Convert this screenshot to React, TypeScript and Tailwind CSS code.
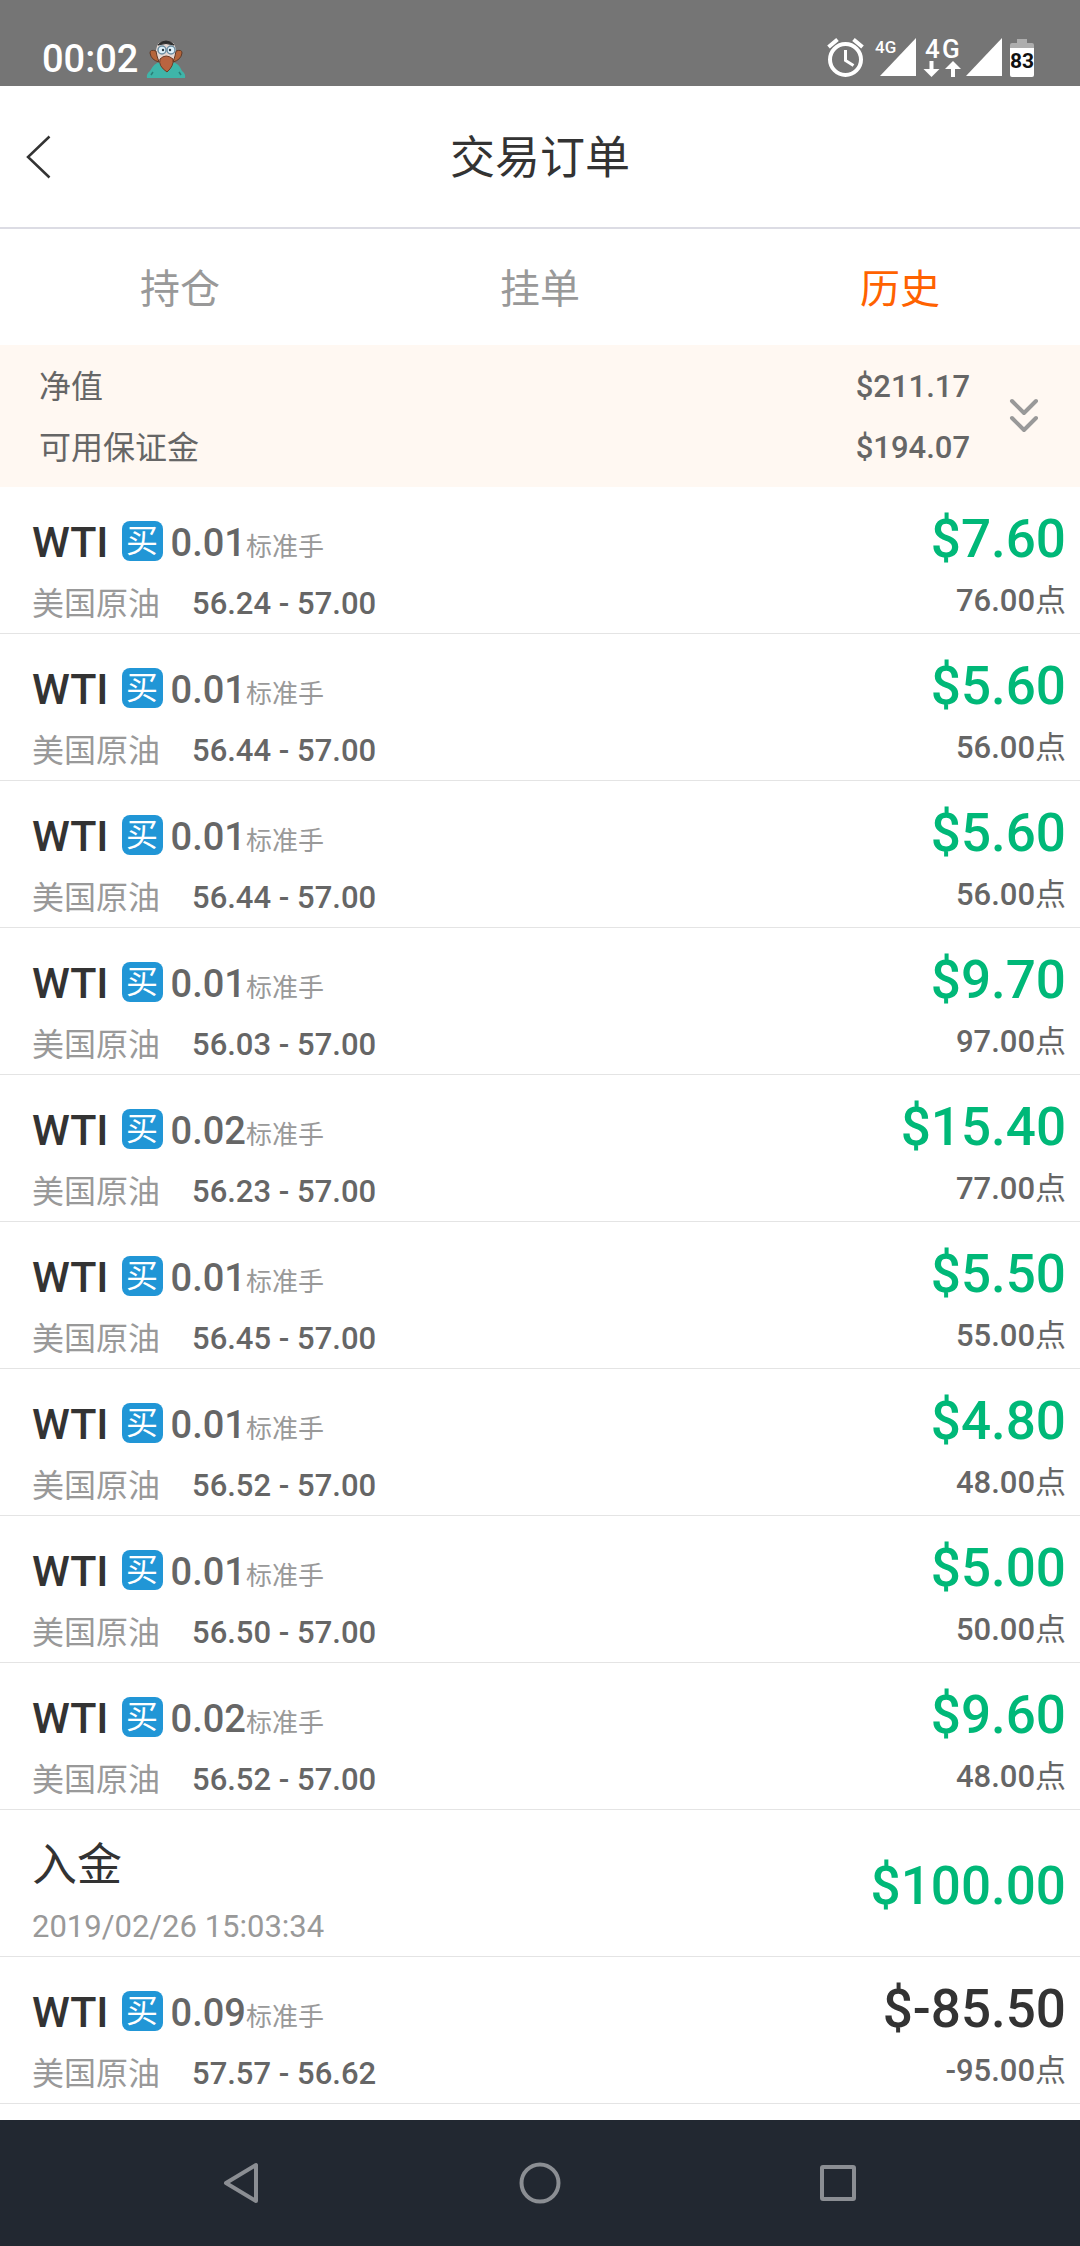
import clsx from 'clsx';

type Entry = {
  id: number;
  type: 'trade' | 'deposit';
  lots?: string;
  open?: string;
  close?: string;
  time?: string;
  profit: string;
  points?: string;
};

const summary = [
  { label: '净值', value: '$211.17' },
  { label: '可用保证金', value: '$194.07' },
];

const tabs = ['持仓', '挂单', '历史'];

const entries: Entry[] = [
  { id: 1, type: 'trade', lots: '0.01', open: '56.24', close: '57.00', profit: '7.60', points: '76.00' },
  { id: 2, type: 'trade', lots: '0.01', open: '56.44', close: '57.00', profit: '5.60', points: '56.00' },
  { id: 3, type: 'trade', lots: '0.01', open: '56.44', close: '57.00', profit: '5.60', points: '56.00' },
  { id: 4, type: 'trade', lots: '0.01', open: '56.03', close: '57.00', profit: '9.70', points: '97.00' },
  { id: 5, type: 'trade', lots: '0.02', open: '56.23', close: '57.00', profit: '15.40', points: '77.00' },
  { id: 6, type: 'trade', lots: '0.01', open: '56.45', close: '57.00', profit: '5.50', points: '55.00' },
  { id: 7, type: 'trade', lots: '0.01', open: '56.52', close: '57.00', profit: '4.80', points: '48.00' },
  { id: 8, type: 'trade', lots: '0.01', open: '56.50', close: '57.00', profit: '5.00', points: '50.00' },
  { id: 9, type: 'trade', lots: '0.02', open: '56.52', close: '57.00', profit: '9.60', points: '48.00' },
  { id: 10, type: 'deposit', time: '2019/02/26 15:03:34', profit: '100.00' },
  { id: 11, type: 'trade', lots: '0.09', open: '57.57', close: '56.62', profit: '-85.50', points: '-95.00' },
];

function AvatarIcon() {
  return (
    <svg width="40" height="38" viewBox="0 0 40 38">
      <path d="M1 38 Q0 34 4 31 Q8 23 14 22 H26 Q33 23 36 31 Q40 34 39 38 Z" fill="#3fb5a9" />
      <path d="M5 35l2-3M35 35l-2-3" stroke="#2b7f78" strokeWidth="1.5" />
      <path d="M10 10 Q11 1 20 1 Q29 1 30 10 L31 19 Q26 23 20 23 Q14 23 9 19 Z" fill="#e4d8d3" />
      <path d="M10 11 Q4 9 4 13 Q5 20 13 22 L11 16 ZM30 11 Q36 9 36 13 Q35 20 27 22 L29 16 Z" fill="#b5653a" stroke="#5f3a28" strokeWidth="1" />
      <path d="M12 5 Q15 1 20 1 Q25 1 28 5 Q20 2 12 5 Z" fill="#2e2e2e" stroke="#2e2e2e" strokeWidth="1" />
      <path d="M14 19 Q20 13 27 19 Q28 26 21 32 Q12 26 14 19 Z" fill="#b96440" stroke="#6e3b25" strokeWidth="1" />
      <circle cx="16" cy="10" r="4" fill="#dff1fa" stroke="#6b8da1" strokeWidth="1.5" />
      <circle cx="25" cy="10" r="4" fill="#dff1fa" stroke="#6b8da1" strokeWidth="1.5" />
      <circle cx="17" cy="10" r="1.2" fill="#24343d" />
      <circle cx="24" cy="10" r="1.2" fill="#24343d" />
    </svg>
  );
}

function StatusIcons() {
  return (
    <svg width="208" height="54" viewBox="0 -14 208 54" fontFamily="Roboto, sans-serif">
      {/* alarm */}
      <g fill="none" stroke="#fff">
        <circle cx="18.5" cy="21.5" r="15.5" strokeWidth="4" />
        <path d="M18.5 12v10.5l8 5" strokeWidth="3" />
        <path d="M1.5 9l9-7.500M35.500 9l-9-7.500" strokeWidth="4" />
      </g>
      {/* sim 1 */}
      <path d="M89 0v38H53z" fill="#fff" />
      <text x="48" y="15" fontSize="17" fontWeight="500" fill="#fff">4G</text>
      {/* sim 2 */}
      <text x="98" y="20" fontSize="26" fontWeight="500" fill="#fff">4</text>
      <text x="115" y="20" fontSize="26" fontWeight="500" fill="#fff">G</text>
      <path d="M102.500 23h4v8h6l-8 8-8-8h6zM124 39h4v-8h6l-8-8-8 8h6z" fill="#fff" />
      <path d="M175 0v38h-36z" fill="#fff" />
      {/* battery */}
      <path d="M190 1h10v4h5q2 0 2 2v4h-24V7q0-2 2-2h5z" fill="#adadad" />
      <path d="M183 10h24v27q0 2-2 2h-20q-2 0-2-2z" fill="#fff" />
      <text x="195" y="30" fontSize="21" fontWeight="700" textAnchor="middle" fill="#111">83</text>
    </svg>
  );
}

function StatusBar() {
  return (
    <div className="flex h-[86px] items-end justify-between bg-[#757575] pb-2 pr-[45px] pl-[42px] text-white">
      <div className="flex items-center gap-2">
        <span className="text-[38px] leading-[36px] font-medium">00:02</span>
        <AvatarIcon />
      </div>
      <StatusIcons />
    </div>
  );
}

function Header() {
  return (
    <header className="grid h-[143px] grid-cols-[1fr_auto_1fr] items-center border-b-2 border-[#dcdce4]">
      <button type="button" aria-label="返回" className="justify-self-start pl-[26px]">
        <svg width="26" height="44" viewBox="0 0 26 44" fill="none" stroke="#333" strokeWidth="2.5">
          <path d="M23.500 1.500L2 22l21.500 20.500" />
        </svg>
      </button>
      <h1 className="pt-1 text-[45px] leading-[60px] text-[#333]">交易订单</h1>
    </header>
  );
}

function TradeTitle({ lots }: { lots?: string }) {
  return (
    <>
      <span className="text-[43px] font-medium text-[#333]">WTI</span>
      <span className="mr-2 mb-1 ml-[13px] flex h-10 w-[41px] items-center justify-center rounded-lg bg-[#2196d6] text-[32px] text-white">
        买
      </span>
      <span className="flex items-baseline">
        <span className="text-[38px] font-medium text-[#666]">{lots}</span>
        <span className="text-[26px] text-[#999]">标准手</span>
      </span>
    </>
  );
}

function EntryRow({ entry }: { entry: Entry }) {
  const isTrade = entry.type === 'trade';
  const isLoss = entry.profit.startsWith('-');

  return (
    <li className="flex h-[147px] justify-between border-b border-[#e4e4e4] pr-3.5 pl-8 leading-none">
      <div className="pt-[25px]">
        <div className="flex h-[61px] items-center">
          {isTrade ? <TradeTitle lots={entry.lots} /> : <span className="text-[45px] text-[#333]">入金</span>}
        </div>
        <div className="flex h-[61px] items-center">
          {isTrade ? (
            <>
              <span className="mr-8 text-[32px] text-[#999]">美国原油</span>
              <span className="text-[31px] font-medium text-[#666]">
                {entry.open} - {entry.close}
              </span>
            </>
          ) : (
            <span className="text-[31px] text-[#999]">{entry.time}</span>
          )}
        </div>
      </div>

      <div className={clsx('flex flex-col items-end', isTrade ? 'pt-[22px]' : 'justify-center pt-1.5')}>
        <div
          className={clsx(
            'flex h-[61px] items-center text-[53px] font-medium',
            isLoss ? 'text-[#333]' : 'text-[#00b878]'
          )}
        >
          ${entry.profit}
        </div>
        {isTrade && (
          <div className="flex h-[61px] items-center text-[#666]">
            <span className="text-[31px] font-medium">{entry.points}</span>
            <span className="text-[31px]">点</span>
          </div>
        )}
      </div>
    </li>
  );
}

function NavBar() {
  return (
    <nav className="grid h-[126px] grid-cols-3 items-center justify-items-center bg-[#222831] px-[92px] text-[#8b8e93]">
      <button type="button" aria-label="Back">
        <svg width="42" height="42" viewBox="0 0 42 42" fill="none" stroke="currentColor" strokeWidth="4" strokeLinejoin="round">
          <path d="M36 3v36L6 21z" />
        </svg>
      </button>
      <button type="button" aria-label="Home">
        <svg width="42" height="42" viewBox="0 0 42 42" fill="none" stroke="currentColor" strokeWidth="4">
          <circle cx="21" cy="21" r="18.500" />
        </svg>
      </button>
      <button type="button" aria-label="Recent">
        <svg width="42" height="42" viewBox="0 0 42 42" fill="none" stroke="currentColor" strokeWidth="4">
          <rect x="4" y="5" width="32" height="32" rx="1" />
        </svg>
      </button>
    </nav>
  );
}

export default function App() {
  return (
    <div className="flex min-h-screen flex-col bg-white font-[Roboto,'Noto_Sans_CJK_SC',sans-serif]">
      <StatusBar />
      <Header />

      <div className="grid h-[116px] grid-cols-3">
        {tabs.map((tab) => (
          <button
            key={tab}
            type="button"
            className={clsx('pt-1.5 text-[40px]', tab === '历史' ? 'text-[#ff6200]' : 'text-[#999]')}
          >
            {tab}
          </button>
        ))}
      </div>

      <section className="flex h-[142px] items-center bg-[#fff8f2] pr-[39px] pl-[39px] text-[#666]">
        <dl className="flex-1 pt-[3px]">
          {summary.map((s) => (
            <div key={s.label} className="flex h-[61px] items-center justify-between">
              <dt className="text-[32px]">{s.label}</dt>
              <dd className="text-[31px] font-medium">{s.value}</dd>
            </div>
          ))}
        </dl>
        <button type="button" aria-label="展开" className="ml-[37px]">
          <svg width="34" height="36" viewBox="0 0 34 36" fill="none" stroke="#999" strokeWidth="4" strokeLinecap="round" strokeLinejoin="round">
            <path d="M5 3l12 12L29 3M5 20l12 12 12-12" />
          </svg>
        </button>
      </section>

      <ul className="flex-1">
        {entries.map((entry) => (
          <EntryRow key={entry.id} entry={entry} />
        ))}
      </ul>

      <NavBar />
    </div>
  );
}
